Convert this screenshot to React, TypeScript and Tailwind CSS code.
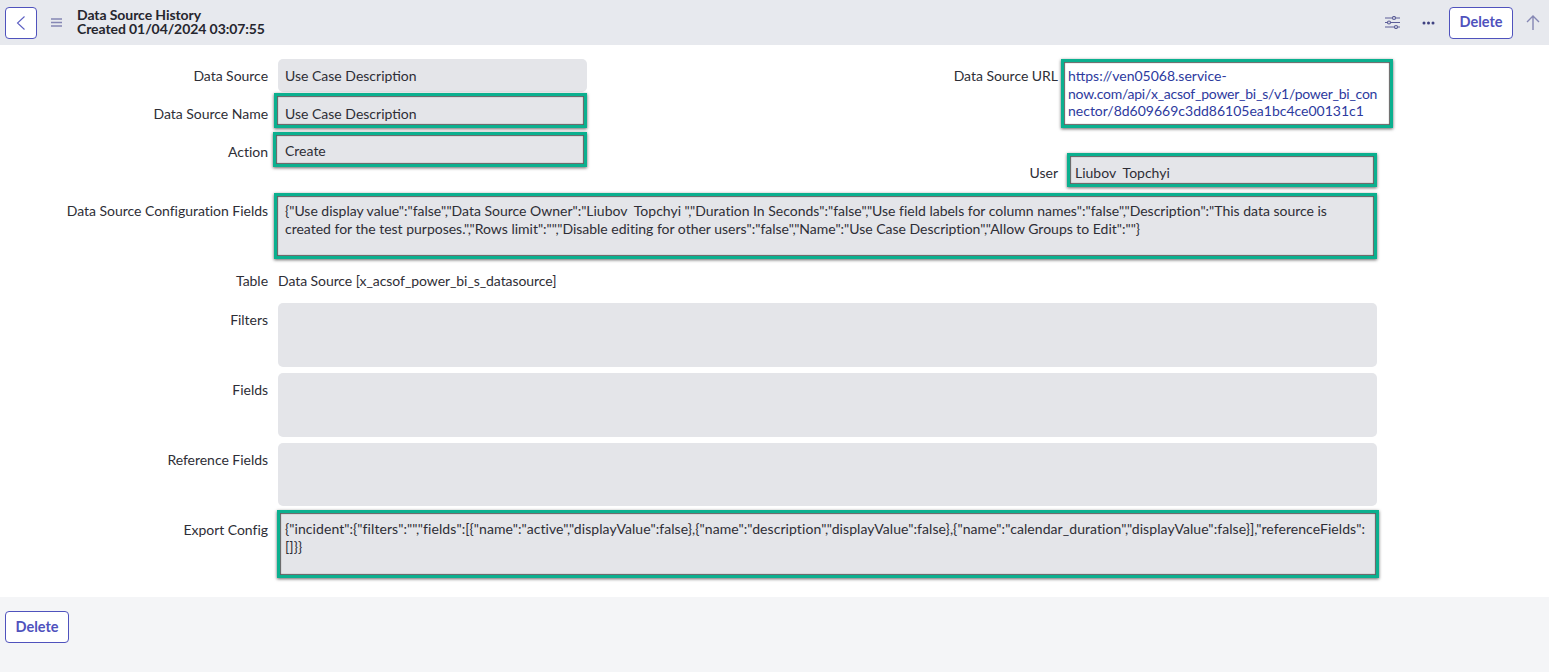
import React from "react";

const hl =
  "border-[3px] border-[#0bb08f] shadow-[0_1px_3px_rgba(0,0,0,0.6),inset_0_0_1px_1px_rgba(70,70,70,0.85)]";

function Label({ children, className = "" }: { children: React.ReactNode; className?: string }) {
  return <div className={`w-[268px] shrink-0 text-right tracking-[-0.03px] text-[#2e2e36] ${className}`}>{children}</div>;
}

function OutlineButton({ className = "" }: { className?: string }) {
  return (
    <button
      className={`h-[32px] w-[64px] rounded-[4px] border border-[#4f52bd] bg-white pb-[1px] text-[14.5px] font-bold text-[#4f52bd] ${className}`}
    >
      Delete
    </button>
  );
}

function Header() {
  return (
    <header className="flex h-[45px] items-center bg-[#e7e9ee] pl-[5px] pr-[9px]">
      <button className="flex h-[32px] w-[32px] items-center justify-center rounded-[4px] border border-[#4f52bd] bg-white">
        <svg width="10" height="16" viewBox="0 0 10 16" fill="none" stroke="#5b5ec2" strokeWidth="1.1">
          <path d="M8.5 1.5 1.5 8l7 6.5" />
        </svg>
      </button>
      <svg className="ml-[14px]" width="11" height="9" viewBox="0 0 11 9" fill="none" stroke="#8587b4" strokeWidth="1.6">
        <path d="M0 1h11M0 4.500h11M0 8h11" />
      </svg>
      <div className="ml-[15px] pb-[2px] text-[14px] leading-[14px] font-bold tracking-[-0.08px] text-[#26262e]">
        <div>Data Source History</div>
        <div>Created 01/04/2024 03:07:55</div>
      </div>
      <div className="ml-auto flex items-center">
        <svg width="15" height="13" viewBox="0 0 15 13" fill="none" stroke="#5d5f98" strokeWidth="1.2">
          <path d="M0 2h7.500M10.500 2H15M0 6.500h2.500M5.500 6.500H15M0 11h9.500M12.500 11H15" />
          <circle cx="9" cy="2" r="1.500" />
          <circle cx="4" cy="6.500" r="1.500" />
          <circle cx="11" cy="11" r="1.500" />
        </svg>
        <svg className="ml-[22px]" width="13" height="4" viewBox="0 0 13 4" fill="#3f4180">
          <circle cx="2" cy="2" r="1.500" />
          <circle cx="6.500" cy="2" r="1.500" />
          <circle cx="11" cy="2" r="1.500" />
        </svg>
        <OutlineButton className="ml-[14px]" />
        <svg className="ml-[13px]" width="14" height="15" viewBox="0 0 14 15" fill="none" stroke="#8587b4" strokeWidth="1.400">
          <path d="M7 15V1M1 7l6-6 6 6" />
        </svg>
      </div>
    </header>
  );
}

export default function App() {
  return (
    <div
      className="flex min-h-[672px] flex-col bg-[#f4f5f7] text-[14px] text-[#2e2e36]"
      style={{ fontFamily: '"Lato", "Liberation Sans", sans-serif' }}
    >
      <Header />
      <main className="h-[552px] bg-white pt-[14px]">
        <section className="flex h-[128px]">
          <div className="w-[790px] shrink-0">
            <div className="flex h-[33px] items-center">
              <Label>Data Source</Label>
              <div className="ml-[10px] flex h-full w-[309px] items-center rounded-[5px] bg-[#e4e5e9] px-[7px]">Use Case Description</div>
            </div>
            <div className="mt-px flex h-[35px] items-center">
              <Label className="mt-[6px]">Data Source Name</Label>
              <div className={`ml-[6px] flex h-full w-[313px] items-center bg-[#e4e5e9] pl-[8px] pt-[5px] ${hl}`}>Use Case Description</div>
            </div>
            <div className="mt-[4px] flex h-[35px] items-center">
              <Label className="mt-[4px]">Action</Label>
              <div className={`ml-[5px] flex h-full w-[314px] items-center bg-[#e4e5e9] pl-[9px] pt-[2px] ${hl}`}>Create</div>
            </div>
          </div>
          <div className="min-w-0 flex-1">
            <div className="flex h-[69px] items-start">
              <Label className="mt-[6px]">Data Source URL</Label>
              <div className={`ml-[3px] h-full w-[332px] bg-white pl-[4px] pt-[5px] leading-[17.5px] whitespace-nowrap text-[#2d3a9e] ${hl}`}>
                https://ven05068.service-
                <br />
                <span className="tracking-[-0.24px]">now.com/api/x_acsof_power_bi_s/v1/power_bi_con</span>
                <br />
                nector/8d609669c3dd86105ea1bc4ce00131c1
              </div>
            </div>
            <div className="mt-[25px] flex h-[34px] items-center">
              <Label className="mt-[4px]">User</Label>
              <div className={`ml-[9px] flex h-full w-[310px] items-center bg-[#e4e5e9] pl-[5px] pt-[4px] whitespace-pre ${hl}`}>Liubov  Topchyi</div>
            </div>
          </div>
        </section>

        <div className="mt-[6px] flex h-[66px] items-start">
          <Label className="mt-[7px]">Data Source Configuration Fields</Label>
          <div className={`ml-[6px] h-full w-[1103px] bg-[#e4e5e9] pl-[8px] pr-[30px] pt-[6px] leading-[17.5px] tracking-[-0.01px] whitespace-pre-wrap ${hl}`}>
            {'{"Use display value":"false","Data Source Owner":"Liubov  Topchyi ","Duration In Seconds":"false","Use field labels for column names":"false","Description":"This data source is created for the test purposes.","Rows limit":"","Disable editing for other users":"false","Name":"Use Case Description","Allow Groups to Edit":""}'}
          </div>
        </div>

        <div className="mt-[12px] flex h-[20px] items-center">
          <Label className="mb-[2px]">Table</Label>
          <div className="mb-[2px] ml-[10px] tracking-[-0.07px]">Data Source [x_acsof_power_bi_s_datasource]</div>
        </div>

        <div className="mt-[12px] flex h-[64px] items-start">
          <Label className="mt-[6px]">Filters</Label>
          <div className="ml-[10px] h-full w-[1099px] rounded-[5px] bg-[#e4e5e9]" />
        </div>
        <div className="mt-[6px] flex h-[64px] items-start">
          <Label className="mt-[6px]">Fields</Label>
          <div className="ml-[10px] h-full w-[1099px] rounded-[5px] bg-[#e4e5e9]" />
        </div>
        <div className="mt-[6px] flex h-[63px] items-start">
          <Label className="mt-[6px]">Reference Fields</Label>
          <div className="ml-[10px] h-full w-[1099px] rounded-[5px] bg-[#e4e5e9]" />
        </div>

        <div className="mt-[4px] flex h-[68px] items-start">
          <Label className="mt-[9px]">Export Config</Label>
          <div className={`ml-[9px] h-full w-[1102px] bg-[#e4e5e9] pl-[5px] pr-[10px] pt-[7px] leading-[18px] tracking-[0.067px] whitespace-pre-wrap ${hl}`}>
            {'{"incident":{"filters":"","fields":[{"name":"active","displayValue":false},{"name":"description","displayValue":false},{"name":"calendar_duration","displayValue":false}],"referenceFields":[]}}'}
          </div>
        </div>
      </main>
      <footer className="flex-1 pl-[5px] pt-[14px]">
        <OutlineButton />
      </footer>
    </div>
  );
}
